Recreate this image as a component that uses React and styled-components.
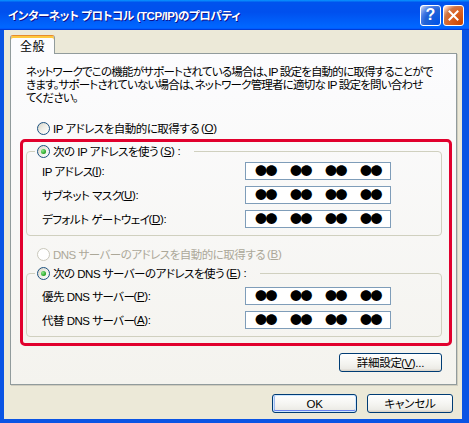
import React from 'react';
import styled, { createGlobalStyle } from 'styled-components';

const GlobalStyle = createGlobalStyle`
  html, body {
    margin: 0;
    padding: 0;
    background: #0a54e4;
  }
  body {
    font-family: "Liberation Sans", "Noto Sans CJK JP", sans-serif;
    font-size: 11.5px;
    letter-spacing: -0.5px;
    color: #000;
    font-feature-settings: "palt";
    text-autospace: no-autospace;
  }
  * {
    box-sizing: border-box;
  }
`;

const Window = styled.div`
  width: 469px;
  height: 423px;
  display: flex;
  flex-direction: column;
  background: #0a54e4;
  overflow: hidden;
`;

const TitleBar = styled.div`
  height: 30px;
  flex: none;
  display: flex;
  align-items: center;
  gap: 2px;
  padding: 0 5px 0 8px;
  background: linear-gradient(180deg, #0997ff, #0053ee 8%, #0050ee 40%, #0066ff 88%, #0066ff 93%, #005bff 95%, #003dd7 96%, #003dd7);
`;

const Title = styled.div`
  flex: 1;
  color: #fff;
  font-weight: bold;
  font-size: 11.5px;
  letter-spacing: -0.4px;
  white-space: nowrap;
  text-shadow: 1px 1px #0f1089;
`;

const CaptionButton = styled.div`
  width: 21px;
  height: 21px;
  flex: none;
  border: 1px solid #fff;
  border-radius: 3px;
  display: flex;
  align-items: center;
  justify-content: center;
  color: #fff;
  font-weight: bold;
  font-size: 16px;
  letter-spacing: 0;
  background: ${({ $close }) => $close
    ? 'radial-gradient(circle at 90% 90%, #cc4600 0%, #dc6527 55%, #cd7546 70%, #ffccb2 90%, #fff 100%)'
    : 'radial-gradient(circle at 90% 90%, #0054e9 0%, #2263d5 55%, #4479e4 70%, #a3bbec 90%, #fff 100%)'};
`;

const Body = styled.div`
  flex: 1;
  display: flex;
  flex-direction: column;
  margin: 0 7px 4px 4px;
  padding: 5px 5px 6px 6px;
  background: #ece9d8;
`;

const TabStrip = styled.div`
  display: flex;
  height: 18px;
`;

const Tab = styled.div`
  position: relative;
  z-index: 1;
  width: 45px;
  height: 19px;
  padding-top: 1px;
  display: flex;
  align-items: center;
  justify-content: center;
  border: 1px solid #919b9c;
  border-top: 1px solid #e68b2c;
  border-bottom: none;
  border-radius: 3px 3px 0 0;
  background: #fcfcfe;
  box-shadow: inset 0 2px 0 #ffc83c;
  font-size: 12px;
  letter-spacing: 0.5px;
`;

const Panel = styled.div`
  height: 332px;
  flex: none;
  display: flex;
  flex-direction: column;
  padding: 12px 4px 0 9px;
  border: 1px solid #919b9c;
  background: linear-gradient(180deg, #fcfcfe, #f4f3ee);
  box-shadow: 1px 1px 0 #d0cdbf;
`;

const Description = styled.div`
  margin-left: 6px;
  line-height: 13px;
  letter-spacing: -0.8px;
  white-space: nowrap;
`;

const RadioRow = styled.div`
  display: flex;
  align-items: center;
  gap: 3px;
  height: 14px;
  margin-top: ${({ $top }) => $top || 0}px;
  margin-left: ${({ $left }) => $left || 0}px;
  color: ${({ $disabled }) => ($disabled ? '#aca899' : '#000')};
  white-space: nowrap;
`;

const Radio = styled.span`
  position: relative;
  width: 13px;
  height: 13px;
  flex: none;
  border-radius: 50%;
  border: 1px solid ${({ $disabled }) => ($disabled ? '#cac8bb' : '#1c5180')};
  background: ${({ $disabled }) => ($disabled
    ? '#fff'
    : 'linear-gradient(135deg, #d4d2c6 0%, #eeede6 45%, #fff 100%)')};

  &::after {
    content: '';
    display: ${({ $checked }) => ($checked ? 'block' : 'none')};
    position: absolute;
    left: 3px;
    top: 3px;
    width: 5px;
    height: 5px;
    border-radius: 50%;
    background: radial-gradient(circle at 35% 35%, #8be88b, #21a121 70%);
  }
`;

const AccelWrap = styled.span`
  letter-spacing: -0.3px;
  margin-left: -1px;
`;

const Key = styled.span`
  text-decoration: underline;
`;

function Accel({ k }) {
  return <AccelWrap>(<Key>{k}</Key>)</AccelWrap>;
}

const Highlight = styled.div`
  margin-top: 4px;
  padding: 1px 7px 6px 3px;
  border: 3px solid #e1002d;
  border-radius: 5px;
`;

const GroupBox = styled.fieldset`
  margin: ${({ $top }) => $top || 0}px 0 0 0;
  padding: ${({ $pad }) => $pad}px 0 7px 0;
  border: 1px solid #d0d0bf;
  border-radius: 4px;
  min-width: 0;
`;

const Legend = styled.legend`
  margin-left: 8px;
  padding: 0 14px 0 2px;
  height: 14px;
`;

const FieldGrid = styled.div`
  display: grid;
  grid-template-columns: 203px 146px;
  grid-auto-rows: 18px;
  row-gap: 6px;
  padding-left: 15px;
`;

const FieldLabel = styled.div`
  display: flex;
  align-items: center;
  white-space: nowrap;
`;

const AddressField = styled.div`
  display: flex;
  align-items: center;
  gap: 14px;
  padding-left: 9px;
  border: 1px solid #7f9db9;
  background: #fff;
`;

const DotPair = styled.span`
  font-family: "Noto Sans CJK JP", sans-serif;
  font-size: 12px;
  line-height: 16px;
  letter-spacing: -1.5px;
  width: 21px;
`;

const ButtonRow = styled.div`
  display: flex;
  justify-content: flex-end;
  gap: ${({ $gap }) => $gap || 0}px;
  margin-top: ${({ $top }) => $top || 0}px;
  margin-right: ${({ $right }) => $right || 0}px;
`;

const Button = styled.button`
  width: ${({ $w }) => $w}px;
  height: 19px;
  padding: 0;
  font-family: "Liberation Sans", "Noto Sans CJK JP", sans-serif;
  font-size: 11.5px;
  letter-spacing: -0.2px;
  line-height: 16px;
  color: #000;
  font-feature-settings: "palt";
  border: 1px solid #003c74;
  border-radius: 3px;
  background: linear-gradient(180deg, #fff, #f3f3ef 60%, #ecebe6 86%, #d6d0c5);
  box-shadow: ${({ $default }) => ($default
    ? 'inset 0 0 0 1px #cee7ff, inset 0 -1px 0 1px #6982ee, inset 1px 0 0 1px #a0b9ee'
    : 'none')};
`;

const IP_ROWS = [
  { label: 'IP アドレス', key: 'I' },
  { label: 'サブネット マスク', key: 'U' },
  { label: 'デフォルト ゲートウェイ', key: 'D' },
];

const DNS_ROWS = [
  { label: '優先 DNS サーバー', key: 'P' },
  { label: '代替 DNS サーバー', key: 'A' },
];

function Address() {
  return (
    <AddressField>
      {[0, 1, 2, 3].map((i) => <DotPair key={i}>●●</DotPair>)}
    </AddressField>
  );
}

function Fields({ rows }) {
  return (
    <FieldGrid>
      {rows.map((r) => (
        <React.Fragment key={r.key}>
          <FieldLabel>{r.label}<Accel k={r.key} />:</FieldLabel>
          <Address />
        </React.Fragment>
      ))}
    </FieldGrid>
  );
}

export default function App() {
  return (
    <>
      <GlobalStyle />
      <Window>
        <TitleBar>
          <Title>インターネット プロトコル (TCP/IP)のプロパティ</Title>
          <CaptionButton>?</CaptionButton>
          <CaptionButton $close>
            <svg width="11" height="11" viewBox="0 0 11 11">
              <path d="M1.5 1.5 L9.5 9.5 M9.5 1.5 L1.5 9.5" stroke="#fff" strokeWidth="2" strokeLinecap="square" />
            </svg>
          </CaptionButton>
        </TitleBar>
        <Body>
          <TabStrip>
            <Tab>全般</Tab>
          </TabStrip>
          <Panel>
            <Description>
              ネットワークでこの機能がサポートされている場合は、IP 設定を自動的に取得することがで<br />
              きます。サポートされていない場合は、ネットワーク管理者に適切な IP 設定を問い合わせ<br />
              てください。
            </Description>
            <RadioRow $top={16} $left={17}>
              <Radio />IP アドレスを自動的に取得する<Accel k="O" />
            </RadioRow>
            <Highlight>
              <GroupBox $top={1} $pad={4}>
                <Legend>
                  <RadioRow><Radio $checked />次の IP アドレスを使う<Accel k="S" />:</RadioRow>
                </Legend>
                <Fields rows={IP_ROWS} />
              </GroupBox>
              <RadioRow $top={11} $left={11} $disabled>
                <Radio $disabled />DNS サーバーのアドレスを自動的に取得する<Accel k="B" />
              </RadioRow>
              <GroupBox $top={5} $pad={7}>
                <Legend>
                  <RadioRow><Radio $checked />次の DNS サーバーのアドレスを使う<Accel k="E" />:</RadioRow>
                </Legend>
                <Fields rows={DNS_ROWS} />
              </GroupBox>
            </Highlight>
            <ButtonRow $top={7} $right={10}>
              <Button $w={103}>詳細設定<Accel k="V" />...</Button>
            </ButtonRow>
          </Panel>
          <ButtonRow $top={9} $gap={10} $right={4}>
            <Button $w={85} $default>OK</Button>
            <Button $w={86}>キャンセル</Button>
          </ButtonRow>
        </Body>
      </Window>
    </>
  );
}
